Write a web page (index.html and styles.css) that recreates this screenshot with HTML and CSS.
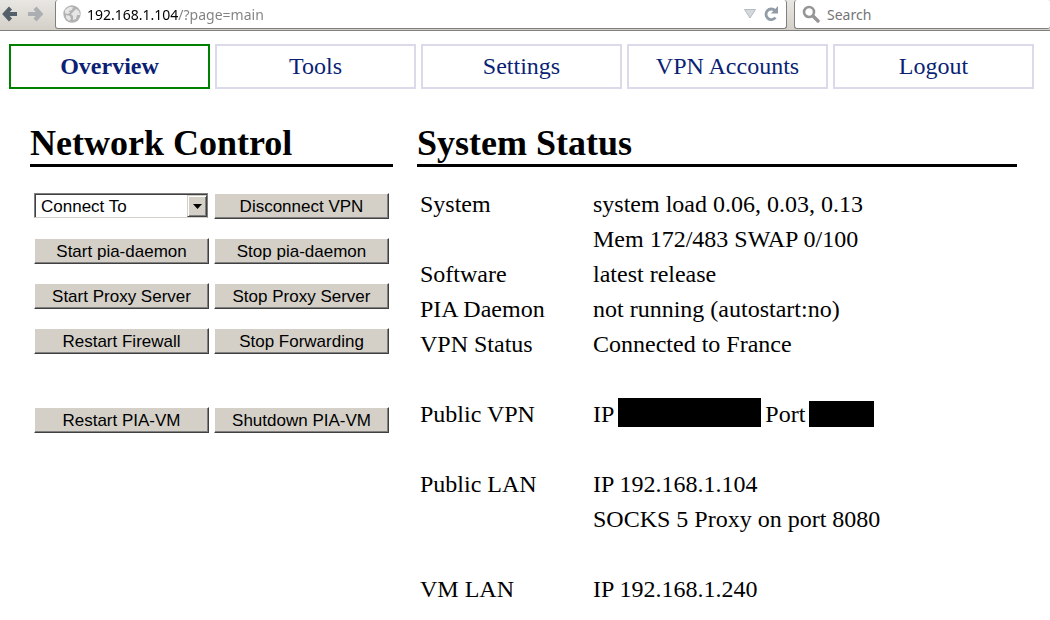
FILE: index.html
```html
<!DOCTYPE html>
<html lang="en">
<head>
<meta charset="utf-8">
<title>PIA-VM Overview</title>
<link rel="stylesheet" href="styles.css">
</head>
<body>
<header class="toolbar">
  <button class="tool back" type="button" aria-label="Back">
    <svg width="16" height="16" viewBox="0 0 16 16"><path d="M8.500 2L3 8l5.500 6M4 8h11" fill="none" stroke="#53606c" stroke-width="4.200"/></svg>
  </button>
  <button class="tool forward" type="button" aria-label="Forward">
    <svg width="16" height="16" viewBox="0 0 16 16"><path d="M7 2l5.500 6L7 14M12 8H0" fill="none" stroke="#acafb1" stroke-width="4.200"/></svg>
  </button>
  <div class="field address">
    <svg width="18" height="18" viewBox="0 0 18 18"><circle cx="9" cy="9" r="8.700" fill="#b2b2b2"/><path d="M2 5l4-3 4 0-1 3-3 1 1 2-3 1-2-1zM10 7l3-3 3 2 1 4-3 0-1 4-3 1 0-4-2-2zM3 10l4 1 1 3-2 2-3-3z" fill="#e6e6e6"/></svg>
    <input class="url" type="text" aria-label="Address" value="192.168.1.104/?page=main">
    <button class="tool" type="button" aria-label="History">
      <svg width="14" height="12" viewBox="0 0 14 12"><path d="M1.500 1.500h11L7 10z" fill="#d3d8dc" stroke="#b5bbc0"/></svg>
    </button>
    <button class="tool" type="button" aria-label="Reload">
      <svg width="16" height="16" viewBox="0 0 16 16"><path d="M12 4.500A5.300 5.300 0 1 0 12.500 11.500" fill="none" stroke="#929ca7" stroke-width="2.800"/><path d="M15 0v7.500H8z" fill="#929ca7"/></svg>
    </button>
  </div>
  <div class="field search">
    <svg width="18" height="18" viewBox="0 0 18 18"><circle cx="7" cy="7" r="5" fill="none" stroke="#969696" stroke-width="2.600"/><path d="M11 11l5 5" stroke="#969696" stroke-width="3.400" stroke-linecap="round"/></svg>
    <input class="query" type="search" aria-label="Search" placeholder="Search">
  </div>
</header>

<nav class="tabs">
  <a class="tab current" href="#overview">Overview</a>
  <a class="tab" href="#tools">Tools</a>
  <a class="tab" href="#settings">Settings</a>
  <a class="tab" href="#accounts">VPN Accounts</a>
  <a class="tab" href="#logout">Logout</a>
</nav>

<main class="panels">
  <section>
    <h2 class="title">Network Control</h2>
    <form class="controls">
      <div class="picker">
        <select class="connect" aria-label="Connect To"><option>Connect To</option></select>
        <span class="arrow"><svg width="9" height="5" viewBox="0 0 9 5"><path d="M0 0h9L4.500 5z"/></svg></span>
      </div>
      <button class="btn" type="button">Disconnect VPN</button>
      <button class="btn" type="button">Start pia-daemon</button>
      <button class="btn" type="button">Stop pia-daemon</button>
      <button class="btn" type="button">Start Proxy Server</button>
      <button class="btn" type="button">Stop Proxy Server</button>
      <button class="btn" type="button">Restart Firewall</button>
      <button class="btn" type="button">Stop Forwarding</button>
      <button class="btn power" type="button">Restart PIA-VM</button>
      <button class="btn power" type="button">Shutdown PIA-VM</button>
    </form>
  </section>
  <section>
    <h2 class="title">System Status</h2>
    <table class="status">
      <tbody>
        <tr><th scope="row">System</th><td>system load 0.06, 0.03, 0.13</td></tr>
        <tr><th></th><td>Mem 172/483 SWAP 0/100</td></tr>
        <tr><th scope="row">Software</th><td>latest release</td></tr>
        <tr><th scope="row">PIA Daemon</th><td>not running (autostart:no)</td></tr>
        <tr><th scope="row">VPN Status</th><td>Connected to France</td></tr>
      </tbody>
      <tbody>
        <tr class="spacer"><td colspan="2"></td></tr>
        <tr><th scope="row">Public VPN</th><td><div class="endpoint"><span>IP</span><span class="mask ip"></span><span>Port</span><span class="mask port"></span></div></td></tr>
      </tbody>
      <tbody>
        <tr class="spacer"><td colspan="2"></td></tr>
        <tr><th scope="row">Public LAN</th><td>IP 192.168.1.104</td></tr>
        <tr><th></th><td>SOCKS 5 Proxy on port 8080</td></tr>
      </tbody>
      <tbody>
        <tr class="spacer"><td colspan="2"></td></tr>
        <tr><th scope="row">VM LAN</th><td>IP 192.168.1.240</td></tr>
      </tbody>
    </table>
  </section>
</main>
</body>
</html>
```

FILE: styles.css
```css
* {
  box-sizing: border-box;
}

body {
  margin: 0;
  background: #fff;
  color: #000;
  font-family: "Liberation Serif", "Times New Roman", serif;
  font-size: 24px;
}

.toolbar {
  display: flex;
  align-items: flex-start;
  height: 31px;
  padding-left: 2px;
  overflow: hidden;
  border-bottom: 1px solid #808080;
  background: linear-gradient(#e9e7e3, #d4d0c8);
}

.tool {
  display: flex;
  padding: 0;
  border: 0;
  background: none;
}

.back,
.forward {
  margin-top: 6px;
}

.forward {
  margin-left: 10px;
}

.field {
  display: flex;
  align-items: center;
  height: 29px;
  border: 1px solid #808080;
  border-top: 0;
  border-radius: 3px;
  background: #fff;
}

.address {
  flex: 1;
  gap: 6px;
  margin: 0 7px 0 11px;
  padding: 0 7px;
}

.search {
  flex: 0 0 256px;
  gap: 7px;
  border-right: 0;
  padding-left: 7px;
}

.url,
.query {
  flex: 1;
  min-width: 0;
  height: 28px;
  padding: 0;
  border: 0;
  outline: 0;
  background: none;
  font-family: "Noto Sans", "Open Sans", sans-serif;
  font-size: 14px;
}

/* The host part is dark, the path is grey. */
.url {
  background: linear-gradient(90deg, #000 91px, #808080 91px);
  background-clip: text;
  -webkit-background-clip: text;
  color: transparent;
}

.query::placeholder {
  color: #757575;
}

.tabs {
  display: grid;
  grid-template-columns: repeat(5, 1fr);
  gap: 5px;
  padding: 13px 16px 0 9px;
}

.tab {
  padding: 6px 0 7px;
  border: 2px solid #dadaea;
  color: #0b1f75;
  line-height: 28px;
  text-align: center;
  text-decoration: none;
}

.current {
  border-color: #008000;
  font-weight: bold;
}

.panels {
  display: grid;
  grid-template-columns: 363fr 600fr;
  gap: 24px;
  padding: 34px 33px 12px 30px;
}

.title {
  margin: 0 0 20px;
  border-bottom: 3px solid #000;
  font-size: 36px;
  line-height: 41px;
}

.controls {
  display: grid;
  grid-template-columns: 1fr 1fr;
  gap: 19px 5px;
  padding: 6px 4px 0;
}

.btn,
.connect {
  width: 100%;
  height: 26px;
  border-radius: 0;
  color: #000;
  font-family: "Liberation Sans", Arial, sans-serif;
  font-size: 17px;
  line-height: 22px;
}

.btn {
  padding: 1px 0 0;
  border: 1px solid #fff;
  border-right-color: #404040;
  border-bottom-color: #404040;
  background: #d4d0c8;
  box-shadow: inset -1px -1px #808080;
}

.power {
  margin-top: 34px;
}

.picker {
  display: grid;
  align-items: start;
  padding-right: 1px;
}

.picker > * {
  grid-area: 1 / 1;
}

.connect {
  height: 25px;
  padding: 2px 6px 0;
  appearance: none;
  border: 1px solid #808080;
  border-bottom-color: #d4d0c8;
  background: #fff;
  box-shadow: inset 1px 1px #404040;
}

.arrow {
  display: flex;
  align-items: center;
  justify-content: center;
  justify-self: end;
  width: 20px;
  height: 22px;
  margin: 2px 1px 0 0;
  border: 1px solid #d4d0c8;
  border-right-color: #404040;
  border-bottom-color: #404040;
  background: #d4d0c8;
  box-shadow: inset 1px 1px #fff, inset -1px -1px #808080;
  pointer-events: none;
}

.status {
  width: 100%;
  border-collapse: collapse;
}

.status th,
.status td {
  height: 35px;
  padding: 0 0 0 3px;
  font-weight: normal;
  line-height: 35px;
  text-align: left;
}

.status th {
  width: 173px;
}

.endpoint {
  display: flex;
  align-items: flex-end;
  gap: 4px;
}

.mask {
  height: 26px;
  margin-bottom: 5px;
  background: #000;
}

.ip {
  width: 143px;
  height: 29px;
}

.port {
  width: 65px;
}
```
